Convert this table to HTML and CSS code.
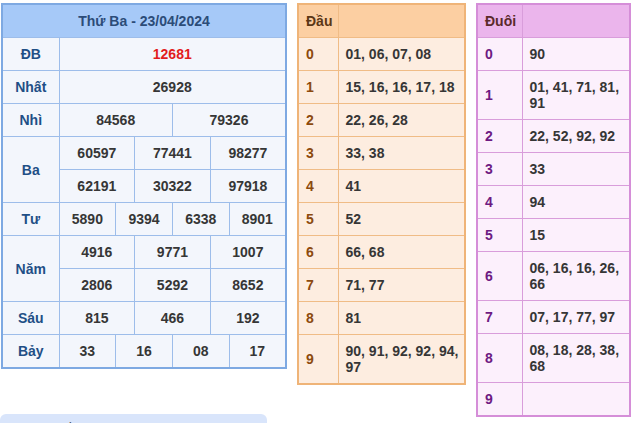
FILE: index.html
```html
<!DOCTYPE html>
<html lang="vi">
<head>
<meta charset="utf-8">
<title>Kết quả xổ số</title>
<link rel="stylesheet" href="styles.css">
</head>
<body>
<div class="page">
  <div class="left">
    <table class="kq">
      <colgroup>
        <col class="c-label">
        <col><col><col><col><col><col><col><col><col><col><col><col>
      </colgroup>
      <thead>
        <tr><th colspan="13" class="kq-title">Thứ Ba - 23/04/2024</th></tr>
      </thead>
      <tbody>
        <tr><td class="lbl">ĐB</td><td colspan="12" class="db">12681</td></tr>
        <tr><td class="lbl">Nhất</td><td colspan="12">26928</td></tr>
        <tr><td class="lbl">Nhì</td><td colspan="6">84568</td><td colspan="6">79326</td></tr>
        <tr><td class="lbl" rowspan="2">Ba</td><td colspan="4">60597</td><td colspan="4">77441</td><td colspan="4">98277</td></tr>
        <tr><td colspan="4">62191</td><td colspan="4">30322</td><td colspan="4">97918</td></tr>
        <tr><td class="lbl">Tư</td><td colspan="3">5890</td><td colspan="3">9394</td><td colspan="3">6338</td><td colspan="3">8901</td></tr>
        <tr><td class="lbl" rowspan="2">Năm</td><td colspan="4">4916</td><td colspan="4">9771</td><td colspan="4">1007</td></tr>
        <tr><td colspan="4">2806</td><td colspan="4">5292</td><td colspan="4">8652</td></tr>
        <tr><td class="lbl">Sáu</td><td colspan="4">815</td><td colspan="4">466</td><td colspan="4">192</td></tr>
        <tr><td class="lbl">Bảy</td><td colspan="3">33</td><td colspan="3">16</td><td colspan="3">08</td><td colspan="3">17</td></tr>
      </tbody>
    </table>
    <div class="note">Lô tô trực tiếp</div>
  </div>

  <table class="lt dau">
    <colgroup><col class="d-label"><col></colgroup>
    <thead><tr><th>Đầu</th><th></th></tr></thead>
    <tbody>
      <tr><td class="k">0</td><td>01, 06, 07, 08</td></tr>
      <tr><td class="k">1</td><td>15, 16, 16, 17, 18</td></tr>
      <tr><td class="k">2</td><td>22, 26, 28</td></tr>
      <tr><td class="k">3</td><td>33, 38</td></tr>
      <tr><td class="k">4</td><td>41</td></tr>
      <tr><td class="k">5</td><td>52</td></tr>
      <tr><td class="k">6</td><td>66, 68</td></tr>
      <tr><td class="k">7</td><td>71, 77</td></tr>
      <tr><td class="k">8</td><td>81</td></tr>
      <tr><td class="k">9</td><td>90, 91, 92, 92, 94, 97</td></tr>
    </tbody>
  </table>

  <table class="lt duoi">
    <colgroup><col class="u-label"><col></colgroup>
    <thead><tr><th>Đuôi</th><th></th></tr></thead>
    <tbody>
      <tr><td class="k">0</td><td>90</td></tr>
      <tr><td class="k">1</td><td>01, 41, 71, 81, 91</td></tr>
      <tr><td class="k">2</td><td>22, 52, 92, 92</td></tr>
      <tr><td class="k">3</td><td>33</td></tr>
      <tr><td class="k">4</td><td>94</td></tr>
      <tr><td class="k">5</td><td>15</td></tr>
      <tr><td class="k">6</td><td>06, 16, 16, 26, 66</td></tr>
      <tr><td class="k">7</td><td>07, 17, 77, 97</td></tr>
      <tr><td class="k">8</td><td>08, 18, 28, 38, 68</td></tr>
      <tr><td class="k">9</td><td></td></tr>
    </tbody>
  </table>
</div>
</body>
</html>
```

FILE: styles.css
```css
html, body {
  margin: 0;
  padding: 0;
  background: #ffffff;
}

body {
  font-family: "Liberation Sans", Arial, sans-serif;
  font-size: 14px;
  font-weight: bold;
  color: #363636;
  overflow: hidden;
}

.page {
  display: flex;
  align-items: flex-start;
  gap: 10px;
  padding: 3px 0 0 1px;
}

.left {
  display: flex;
  flex-direction: column;
  align-items: flex-start;
}

table {
  border-collapse: collapse;
  table-layout: fixed;
}

td, th {
  line-height: 16px;
  padding: 8px 7px;
  font-weight: bold;
}

/* main results table */
.kq {
  width: 286px;
  border: 2px solid #7ea9e2;
  background: #f3f6fc;
}

.kq .c-label {
  width: 57px;
}

.kq td, .kq th {
  border: 1px solid #9dbdea;
  text-align: center;
  padding-left: 0;
  padding-right: 0;
  white-space: nowrap;
}

.kq .kq-title {
  background: #a6c9f8;
  color: #2c4c78;
  border-bottom: 1px solid #9dbdea;
}

.kq .lbl {
  color: #1f4f86;
}

.kq .db {
  color: #e21c1c;
}

.note {
  margin-top: 45px;
  margin-left: -1px;
  width: 267px;
  height: 40px;
  background: #d9e5fb;
  border-radius: 6px;
  font-size: 12px;
  font-weight: normal;
  color: #333333;
  padding: 7px 4px;
  box-sizing: border-box;
}

/* loto tables */
.lt td, .lt th {
  text-align: left;
  vertical-align: middle;
}

.dau {
  width: 169px;
  border: 2px solid #efb478;
  background: #fdede0;
}

.dau .d-label {
  width: 40px;
}

.dau td, .dau th {
  border: 1px solid #f0bc86;
  padding-right: 1px;
}

.dau th {
  background: #fccfa2;
  color: #5b3716;
}

.dau .k {
  color: #8c4a0e;
}

.duoi {
  width: 155px;
  border: 2px solid #d58ed8;
  background: #fcf0fc;
}

.duoi .u-label {
  width: 45px;
}

.duoi td, .duoi th {
  border: 1px solid #d99ddb;
}

.duoi th {
  background: #ebb5ec;
  color: #5b2a2a;
}

.duoi .k {
  color: #6e1a82;
}
```
